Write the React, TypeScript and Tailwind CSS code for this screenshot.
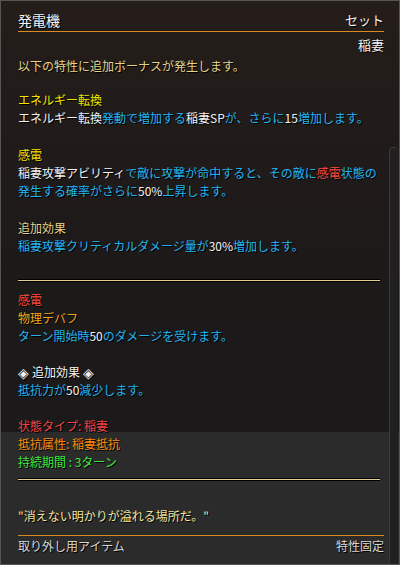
const W = "text-[#f2f2f2]";
const C = "text-[#22b4f0]";

const Rule = ({ className = "" }: { className?: string }) => (
  <div className={`h-px bg-[#e6cf8a] shadow-[0_1px_0_#000,0_-1px_0_#000] ${className}`} />
);

export default function App() {
  return (
    <div className="relative w-[400px] h-[565px] overflow-hidden border border-[#565656] bg-[linear-gradient(to_bottom,#241d1a_0px,#1c1919_300px,#1b1919_431px,#2b2b2b_431px)] font-['Noto_Sans_CJK_JP','Noto_Sans',sans-serif] text-[12px] leading-[18px] [text-shadow:1px_1px_0_#000]">
      {/* scroll track */}
      <div className="absolute right-[1px] top-[146px] bottom-0 w-[9px] rounded-t-[4px] border-l border-t border-[#3a3a3a] bg-[#202020]" />

      <div className="pl-[17px] pr-[15px] pt-[10px]">
        {/* header */}
        <div className="flex justify-between items-center h-[18px]">
          <span className="text-[14px] text-[#f4f4f4]">発電機</span>
          <span className="text-[13px] text-[#f4f4f4]">セット</span>
        </div>
        <div className="mt-[2px] h-px bg-[#d98b22]" />
        <div className="mt-[4px] text-right text-[13px] text-[#f4f4f4]">稲妻</div>

        <div className="mt-[3px] text-[#e4d28a]">以下の特性に追加ボーナスが発生します。</div>

        <div className="mt-[16px]">
          <div className="text-[#f5e400]">エネルギー転換</div>
          <div className={W}>
            エネルギー転換<span className={C}>発動で増加する</span>稲妻SP
            <span className={C}>が、さらに</span>15<span className={C}>増加します。</span>
          </div>
        </div>

        <div className="mt-[19px]">
          <div className="text-[#f5e400]">感電</div>
          <div className={W}>
            稲妻攻撃アビリティ<span className={C}>で敵に攻撃が命中すると、その敵に</span>
            <span className="text-[#ff4b3c]">感電</span>
            <span className={C}>状態の</span>
          </div>
          <div className={C}>
            発生する確率がさらに<span className={W}>50%</span>上昇します。
          </div>
        </div>

        <div className="mt-[19px]">
          <div className="text-[#e4d28a]">追加効果</div>
          <div className={C}>
            稲妻攻撃クリティカルダメージ量が<span className={W}>30%</span>増加します。
          </div>
        </div>

        <div className="pr-[4px]">
          <Rule className="mt-[25px]" />

          <div className="mt-[10px]">
            <div className="text-[#ff4b3c]">感電</div>
            <div className="text-[#f2a61e]">物理デバフ</div>
            <div className={C}>
              ターン開始時<span className={W}>50</span>のダメージを受けます。
            </div>
          </div>

          <div className="mt-[18px]">
            <div className={`${W} flex items-center gap-[3px] h-[18px]`}>
              <span className="text-[14px]">◈</span>
              <span>追加効果</span>
              <span className="text-[14px]">◈</span>
            </div>
            <div className={C}>
              抵抗力が<span className={W}>50</span>減少します。
            </div>
          </div>

          <div className="mt-[18px]">
            <div className="text-[#f04444]">状態タイプ: 稲妻</div>
            <div className="text-[#ff8a0a]">抵抗属性: 稲妻抵抗</div>
            <div className="text-[#3ee83e]">持続期間 : 3ターン</div>
          </div>

          <Rule className="mt-[8px]" />
        </div>

        <div className="mt-[27px] text-[#f0e6a0]">"消えない明かりが溢れる場所だ。"</div>

        <div className="mt-[10px] h-px bg-[#d98b22]" />
        <div className="mt-px flex justify-between text-[#d6d6d6]">
          <span>取り外し用アイテム</span>
          <span>特性固定</span>
        </div>
      </div>
    </div>
  );
}
